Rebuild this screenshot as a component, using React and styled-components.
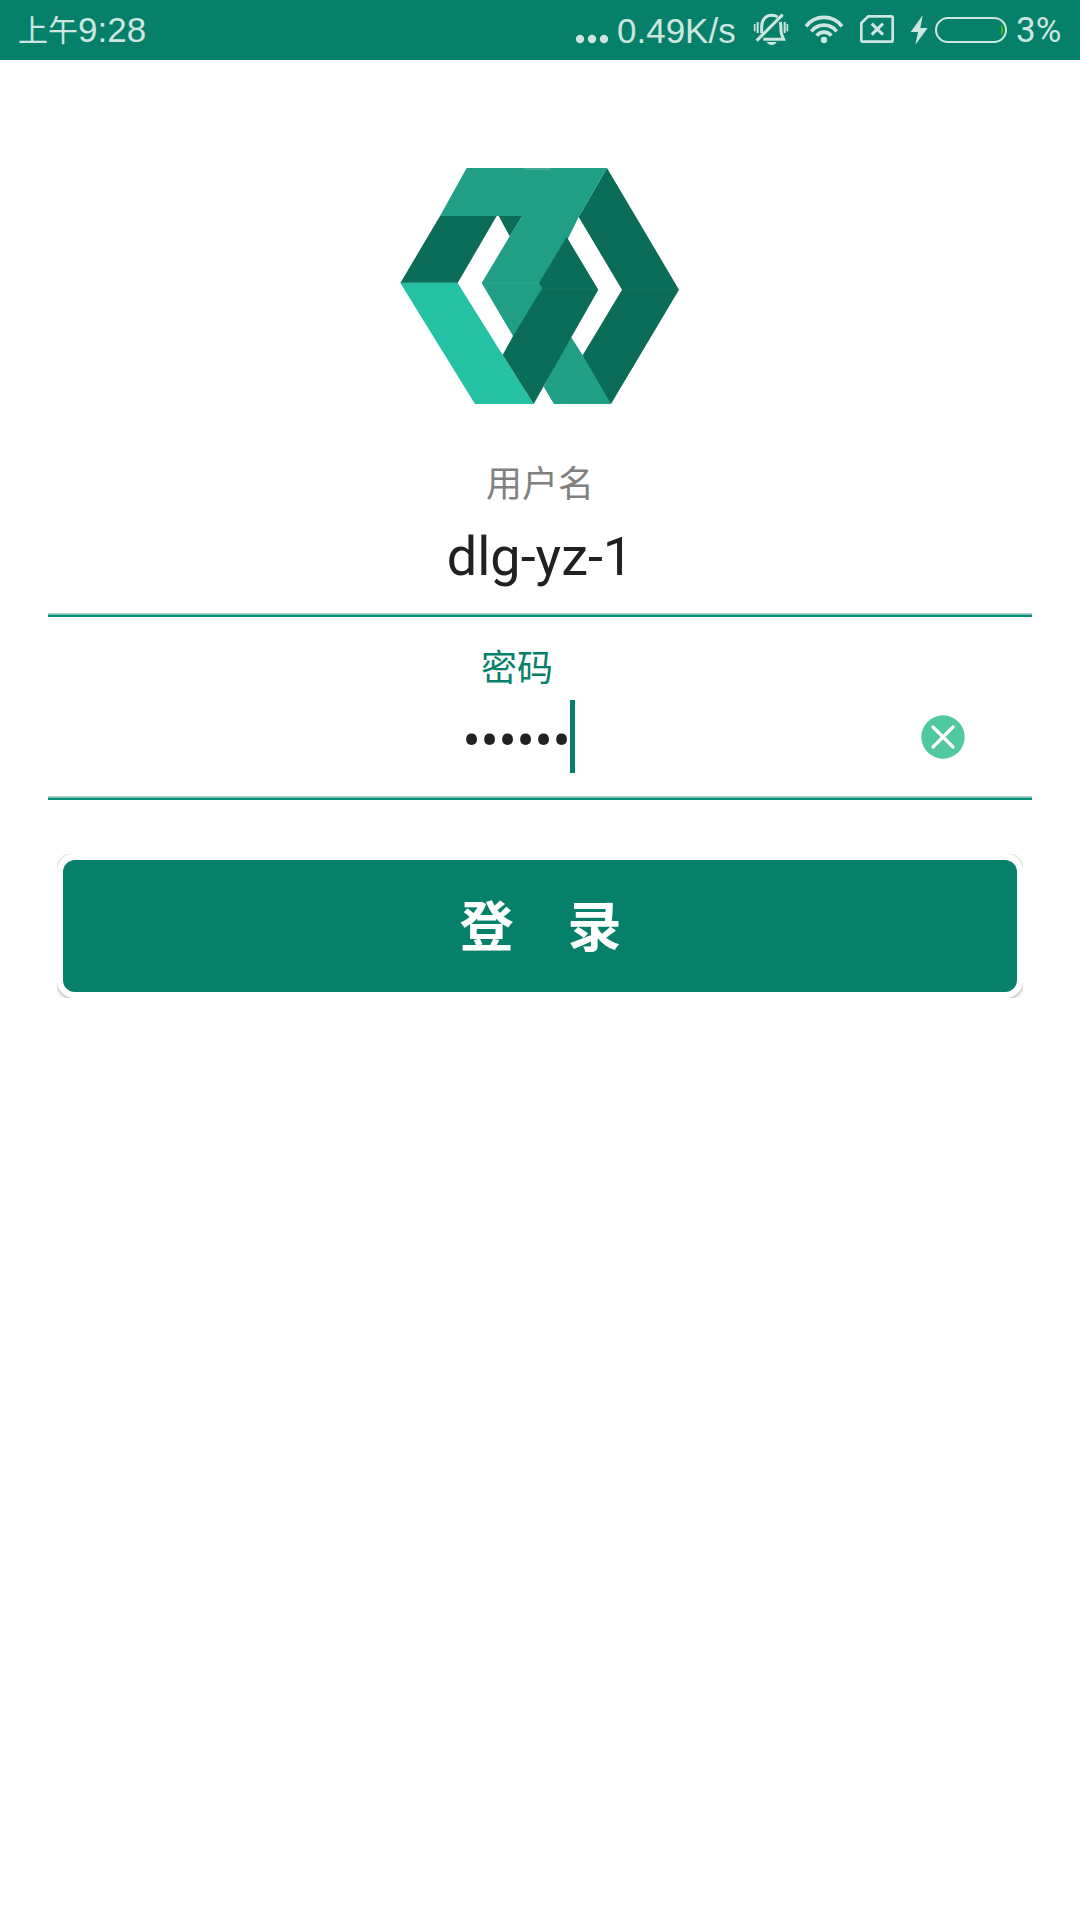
import React from "react";
import styled, { createGlobalStyle } from "styled-components";

const GREEN = "#06806a";
const STATUS = "#cde6e1";

const GlobalStyle = createGlobalStyle`
  * { box-sizing: border-box; }
  body { margin: 0; background: #fff; }
`;

const Screen = styled.div`
  width: 1080px;
  height: 1920px;
  overflow: hidden;
  background: #fff;
  display: flex;
  flex-direction: column;
  font-family: Roboto, "Noto Sans CJK SC", sans-serif;
`;

const StatusBar = styled.header`
  height: 60px;
  flex: none;
  display: flex;
  align-items: center;
  padding-left: 18px;
  background: ${GREEN};
  color: ${STATUS};
  font-family: "Liberation Sans", "Noto Sans CJK SC", sans-serif;
`;

const StatusText = styled.span`
  font-size: ${(p) => p.$size}px;
  line-height: ${(p) => p.$line || 60}px;
  height: 60px;
  white-space: nowrap;
  width: ${(p) => (p.$width ? `${p.$width}px` : "auto")};
`;

const Percent = styled(StatusText)`
  font-family: Roboto, sans-serif;
`;

const Meridiem = styled.span`
  font-size: 30px;
  vertical-align: 1px;
`;

const Indicators = styled.div`
  display: flex;
  margin-left: auto;
  width: 507px;
`;

const Glyph = styled.svg`
  flex: none;
  display: block;
  width: ${(p) => p.$w}px;
  height: 60px;
  margin-right: ${(p) => p.$gap || 0}px;
  fill: none;
  stroke: ${STATUS};
`;

const Main = styled.main`
  display: flex;
  flex-direction: column;
  padding: 108px 48px 0;
`;

const Logo = styled.svg`
  width: 280px;
  height: 236px;
  align-self: center;
  display: block;
`;

const Field = styled.section`
  height: ${(p) => p.$height}px;
  display: flex;
  flex-direction: column;
  align-items: center;
  border-bottom: 2px solid #009178;
  box-shadow: inset 0 -1px 0 #7fc0b2, inset 0 -2px 0 #a8d4cb;
`;

const Label = styled.label`
  font-size: 36px;
  line-height: 52px;
  height: 52px;
  color: ${(p) => (p.$active ? GREEN : "#808080")};
  margin-top: ${(p) => p.$top}px;
  margin-right: ${(p) => p.$shift || 0}px;
`;

const Value = styled.div`
  font-size: 54px;
  line-height: 74px;
  height: 74px;
  color: #212121;
  margin-top: ${(p) => p.$top}px;
`;

const PasswordRow = styled.div`
  width: 100%;
  height: 73px;
  margin-top: 5px;
  display: grid;
  grid-template-columns: 1fr auto 1fr;
  grid-template-rows: 73px;
  align-items: center;
`;

const Password = styled.div`
  grid-column: 2;
  display: flex;
  align-items: center;
  height: 73px;
  color: #212121;
  font-size: 54px;
  letter-spacing: -0.2px;
  margin-right: 43px;
`;

const Dots = styled.span`
  line-height: 73px;
  padding-top: 7px;
  height: 80px;
`;

const Caret = styled.span`
  width: 5px;
  height: 73px;
  margin-left: -1px;
  background: ${GREEN};
`;

const ClearButton = styled.button`
  justify-self: end;
  width: 44px;
  height: 44px;
  padding: 0;
  border: 0;
  background: none;
  margin-right: 67px;
`;

const ButtonFrame = styled.div`
  width: 966px;
  height: 144px;
  align-self: center;
  margin-top: 54px;
  overflow: hidden;
`;

const ButtonEdge = styled.div`
  height: 144px;
  padding: 6px;
  border-radius: 17px;
  background: #fff;
  box-shadow: 0 1px 4px rgba(0, 0, 0, 0.38);
`;

const LoginButton = styled.button`
  width: 100%;
  height: 132px;
  border: 0;
  border-radius: 12px;
  padding: 0 0 4px 1px;
  background: ${GREEN};
  color: #fff;
  font: 700 54px/128px "Noto Sans CJK SC", sans-serif;
`;

function BellOff() {
  return (
    <Glyph $w={42} $gap={8} viewBox="30 0 126 180" strokeWidth="9">
      <path d="M65 100V80C65 58 78 46 95 46C103 46 108 48 113 51" />
      <path d="M121 66C124 76 121 95 125 103L131 118H70" />
      <path d="M128 44L50 122" strokeWidth="9" />
      <path d="M80 126H110C105 138 85 138 80 126Z" fill={STATUS} stroke="none" />
      <path d="M44 72V94M142 72V94" strokeWidth="5" />
      <path d="M53 66V99M134 66V99" strokeWidth="6" />
    </Glyph>
  );
}

function Wifi() {
  return (
    <Glyph $w={48} $gap={8} viewBox="180 0 144 180" strokeWidth="11">
      <path d="M198 79A68 68 0 0 1 306 79" />
      <path d="M214 94A48 48 0 0 1 290 94" />
      <path d="M230 107A28 28 0 0 1 274 107" />
      <circle cx="252" cy="120" r="9.5" fill={STATUS} stroke="none" />
    </Glyph>
  );
}

function NoSim() {
  return (
    <Glyph $w={42} $gap={8} viewBox="348 0 126 180" strokeWidth="8">
      <path d="M385 49H454Q458 49 458 53V121Q458 125 454 125H368Q364 125 364 121V69Z" strokeLinejoin="round" />
      <path d="M395 71L429 104M429 71L395 104" strokeWidth="9" />
    </Glyph>
  );
}

function Battery() {
  return (
    <>
      <Glyph $w={25} $gap={2} viewBox="18 0 75 180">
        <path d="M68 46L32 96H54L46 134L83 84H61Z" fill={STATUS} stroke="none" />
      </Glyph>
      <Glyph $w={76} $gap={7} viewBox="99 0 228 180" strokeWidth="6">
        <path d="M303 73Q310 80 310 90T303 107Z" fill="#43b80b" stroke="none" />
        <rect x="108" y="54" width="210" height="72" rx="36" />
      </Glyph>
    </>
  );
}

function BrandMark() {
  const mid = "#209f86";
  const dark = "#0b6d59";
  return (
    <Logo viewBox="30 39 840 708">
      <path fill={mid} d="M544 547L530 560L461 695L492 747H663L640 680L578 601Z" />
      <path fill={dark} d="M651 39L867 404L663 747L578 601L696 404L566 186Z" />
      <path fill={mid} d="M230 39H651L566 186L460 400L457 404L380 543H369L275 384L359 244L397 183H150Z" />
      <path fill={dark} d="M150 183H320L203 384H31Z" />
      <path fill={dark} d="M326 183H397L359 244Z" />
      <path fill="#25c1a5" d="M31 384H203L338 600L431 747H255Z" />
      <path fill={dark} d="M530 246L625 404L544 547L431 747L338 600L369 543L457 399L447 384Z" />
      <path stroke="#25a48c" strokeWidth="5" d="M280 384H445" />
      <path stroke="#14705e" strokeWidth="4" d="M465 402H620M700 404H862" />
      <path stroke="#25977f" strokeWidth="3" d="M33 383H203" />
      <path stroke="#43ad98" strokeWidth="6" d="M403 42H481" />
    </Logo>
  );
}

export default function App() {
  return (
    <Screen>
      <GlobalStyle />
      <StatusBar>
        <StatusText $size={35}>
          <Meridiem>上午</Meridiem>9:28
        </StatusText>
        <Indicators>
          <Glyph $w={39} $gap={5} viewBox="39 0 117 180">
            <g fill={STATUS} stroke="none">
              <circle cx="60" cy="117" r="12.5" />
              <circle cx="96" cy="117" r="12.5" />
              <circle cx="132" cy="117" r="12.5" />
            </g>
          </Glyph>
          <StatusText $size={35} $width={133} $line={62}>0.49K/s</StatusText>
          <BellOff />
          <Wifi />
          <NoSim />
          <Battery />
          <Percent $size={35} $line={62}>3%</Percent>
        </Indicators>
      </StatusBar>
      <Main>
        <BrandMark />
        <Field $height={213}>
          <Label $top={55}>用户名</Label>
          <Value $top={9}>dlg-yz-1</Value>
        </Field>
        <Field $height={183}>
          <Label $active $top={26} $shift={46}>密码</Label>
          <PasswordRow>
            <Password>
              <Dots>••••••</Dots>
              <Caret />
            </Password>
            <ClearButton aria-label="清除">
              <svg width="44" height="44" viewBox="0 0 44 44" display="block">
                <circle cx="22" cy="22" r="21.7" fill="#50c8a0" />
                <path d="M12 12L32 32M32 12L12 32" stroke="#fff" strokeWidth="3.2" strokeLinecap="round" />
              </svg>
            </ClearButton>
          </PasswordRow>
        </Field>
        <ButtonFrame>
          <ButtonEdge>
            <LoginButton>登　录</LoginButton>
          </ButtonEdge>
        </ButtonFrame>
      </Main>
    </Screen>
  );
}
